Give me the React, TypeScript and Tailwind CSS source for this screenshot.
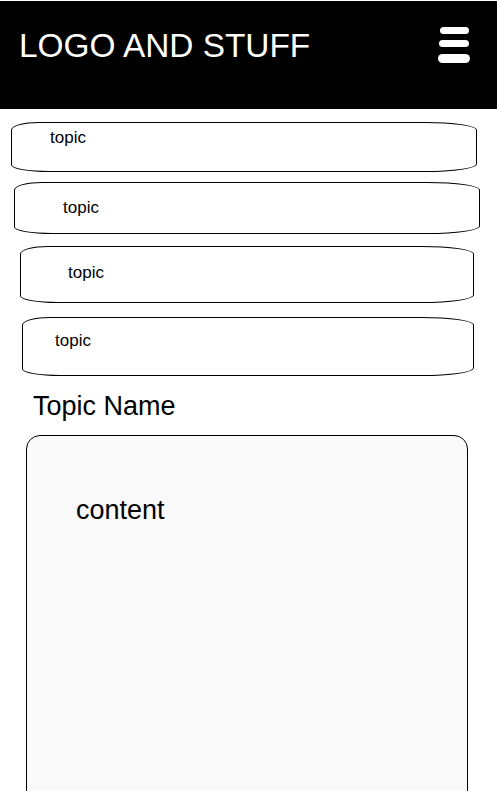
import React from "react";

const topics = [
  { wrap: "mt-[13px] ml-[11px] w-[466px] h-[50px] pl-[38px] pt-[6px]" },
  { wrap: "mt-[10px] ml-[14px] w-[466px] h-[52px] pl-[48px] pt-[16px]" },
  { wrap: "mt-[12px] ml-[20px] w-[454px] h-[57px] pl-[47px] pt-[17px]" },
  { wrap: "mt-[14px] ml-[22px] w-[452px] h-[59px] pl-[32px] pt-[14px]" },
];

const App = () => {
  return (
    <div
      className="h-[791px] w-[497px] overflow-hidden bg-white text-black"
      style={{ fontFamily: '"Liberation Sans", Arial, sans-serif' }}
    >
      {/* Header section */}
      <header className="mt-px flex h-[108px] justify-between bg-black">
        <div className="pl-[19px] pt-[28px] text-[33.4px] leading-none text-white">
          LOGO AND STUFF
        </div>
        <div className="flex flex-col items-end pr-[27px] pt-[26px]">
          <span className="mr-px h-[7px] w-[29px] rounded-full bg-white" />
          <span className="mr-px mt-[6px] h-[7px] w-[30px] rounded-full bg-white" />
          <span className="mt-[7px] h-[9px] w-[32px] rounded-full bg-white" />
        </div>
      </header>

      {/* Topic list */}
      {topics.map((t, i) => (
        <div
          key={i}
          className={`${t.wrap} rounded-[28px_52px_52px_38px/8px_8px_8px_7px] border border-black text-[17px] leading-none`}
        >
          topic
        </div>
      ))}

      {/* Topic detail */}
      <h2 className="ml-[33px] mt-[17px] text-[27px] leading-none">
        Topic Name
      </h2>
      <div className="ml-[26px] mt-[15px] h-[380px] w-[442px] rounded-[14px] border border-black bg-[#fafafa] pl-[49px] pt-[61px] text-[27px] leading-none">
        content
      </div>
    </div>
  );
};

export default App;
